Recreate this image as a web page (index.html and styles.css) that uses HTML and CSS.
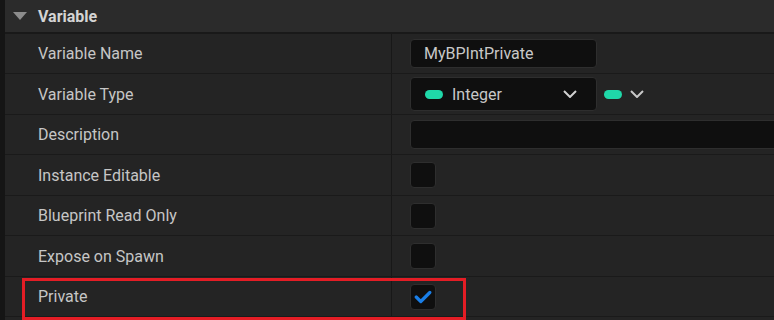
FILE: index.html
```html
<!DOCTYPE html>
<html>
<head>
<meta charset="utf-8">
<link rel="stylesheet" href="styles.css">
</head>
<body>
<div class="panel">
  <div class="header">
    <svg class="caret" width="14" height="8" viewBox="0 0 14 8"><polygon points="0,0 14,0 7,8" fill="#8c8c8c"/></svg>
    <span class="title">Variable</span>
  </div>
  <div class="row">
    <div class="label">Variable Name</div>
    <div class="value"><div class="input name">MyBPIntPrivate</div></div>
  </div>
  <div class="row">
    <div class="label">Variable Type</div>
    <div class="value">
      <div class="input combo">
        <span class="pill"></span>
        <span class="combo-text">Integer</span>
        <svg class="chev" width="14" height="8" viewBox="0 0 14 8"><polyline points="1,1 7,7 13,1" fill="none" stroke="#d0d0d0" stroke-width="2"/></svg>
      </div>
      <span class="pill outer"></span>
      <svg class="chev" width="14" height="8" viewBox="0 0 14 8"><polyline points="1,1 7,7 13,1" fill="none" stroke="#c8c8c8" stroke-width="2"/></svg>
    </div>
  </div>
  <div class="row">
    <div class="label">Description</div>
    <div class="value"><div class="input desc"></div></div>
  </div>
  <div class="row">
    <div class="label">Instance Editable</div>
    <div class="value"><div class="check"></div></div>
  </div>
  <div class="row">
    <div class="label">Blueprint Read Only</div>
    <div class="value"><div class="check"></div></div>
  </div>
  <div class="row">
    <div class="label">Expose on Spawn</div>
    <div class="value"><div class="check"></div></div>
  </div>
  <div class="row">
    <div class="label">Private</div>
    <div class="value">
      <div class="check">
        <svg width="18" height="14" viewBox="0 0 18 14"><polyline points="2.2,7 6.8,11.5 15.8,2.5" fill="none" stroke="#1a7fe8" stroke-width="3.2" stroke-linecap="round" stroke-linejoin="round"/></svg>
      </div>
    </div>
    <div class="highlight"></div>
  </div>
</div>
</body>
</html>
```
FILE: styles.css
```css
html, body {
  margin: 0;
  padding: 0;
  background: #151515;
}
body {
  width: 774px;
  height: 320px;
  overflow: hidden;
  font-family: Roboto, "Liberation Sans", sans-serif;
}
.panel {
  margin-left: 5px;
  background: #242424;
  height: 320px;
}
.header {
  height: 32px;
  background: #2b2b2b;
  border-bottom: 2px solid #191919;
  display: flex;
  align-items: center;
  padding-left: 8px;
}
.caret {
  margin-right: 11px;
}
.title {
  color: #d4d4d4;
  font-weight: bold;
  font-size: 16px;
}
.row {
  position: relative;
  height: 39px;
  border-bottom: 1px solid #1a1a1a;
  display: flex;
}
.row:nth-child(odd) {
  height: 40px;
}
.label {
  flex: none;
  width: 353px;
  padding-left: 33px;
  display: flex;
  align-items: center;
  color: #c6c6c6;
  font-size: 16px;
  border-right: 1px solid #181818;
}
.value {
  flex: 1;
  min-width: 0;
  overflow: hidden;
  display: flex;
  align-items: center;
  padding-left: 18px;
}
.input {
  box-sizing: border-box;
  background: #0f0f0f;
  border: 1px solid #2e2e2e;
  border-radius: 4px;
  color: #c8c8c8;
  font-size: 16px;
  flex: none;
}
.name {
  width: 187px;
  height: 29px;
  display: flex;
  align-items: center;
  padding-left: 13px;
}
.combo {
  width: 187px;
  height: 34px;
  display: flex;
  align-items: center;
  padding-left: 14px;
  padding-right: 19px;
}
.pill {
  width: 18px;
  height: 9px;
  border-radius: 5px;
  background: #1fd8a9;
  flex: none;
}
.combo-text {
  margin-left: 9px;
  flex: 1;
}
.pill.outer {
  margin-left: 7px;
}
.value > .chev {
  margin-left: 8px;
}
.desc {
  width: 400px;
  height: 29px;
}
.check {
  box-sizing: border-box;
  width: 26px;
  height: 26px;
  background: #0f0f0f;
  border: 1px solid #2e2e2e;
  border-radius: 4px;
  display: flex;
  align-items: center;
  justify-content: center;
}
.highlight {
  position: absolute;
  left: 17px;
  top: 1px;
  width: 438px;
  height: 36px;
  border: 3px solid #e41d25;
}
```
